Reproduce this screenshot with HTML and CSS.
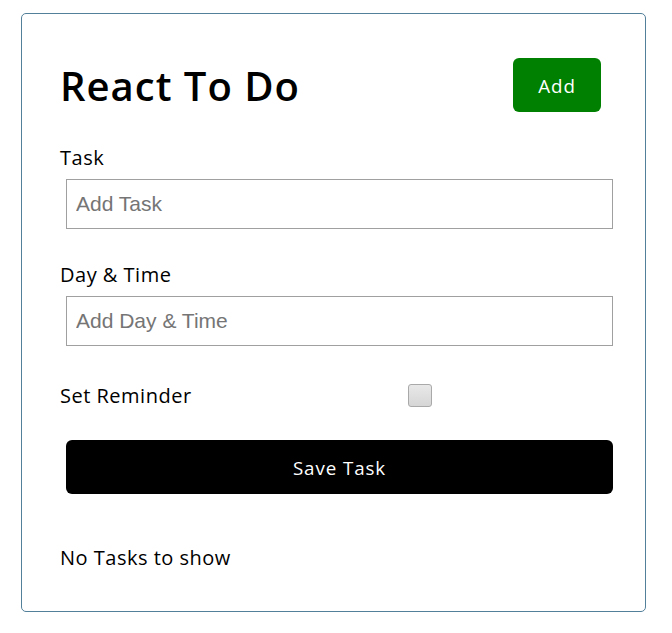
FILE: index.html
```html
<!DOCTYPE html>
<html>
<head>
<meta charset="utf-8">
<link rel="stylesheet" href="styles.css">
</head>
<body>
<div class="container">
  <header class="header">
    <h1 class="title">React To Do</h1>
    <button class="btn btn-add">Add</button>
  </header>
  <form class="add-form">
    <div class="form-control">
      <label class="field-label">Task</label>
      <input class="text-input" type="text" placeholder="Add Task">
    </div>
    <div class="form-control">
      <label class="field-label">Day &amp; Time</label>
      <input class="text-input" type="text" placeholder="Add Day &amp; Time">
    </div>
    <div class="form-control-check">
      <label class="field-label check-label">Set Reminder</label>
      <div class="check-wrap"><input class="check" type="checkbox"></div>
    </div>
    <button type="button" class="btn btn-block">Save Task</button>
  </form>
  <p class="empty">No Tasks to show</p>
</div>
</body>
</html>
```
FILE: styles.css
```css
* { box-sizing: border-box; }
body {
  margin: 0;
  background: #fff;
  font-family: "Open Sans", "Noto Sans", sans-serif;
  color: #000;
}
.container {
  width: 625px;
  height: 599px;
  margin: 13px 0 0 21px;
  border: 1px solid #527f99;
  border-radius: 5px;
  padding: 38px;
}
.header {
  display: flex;
  justify-content: space-between;
  align-items: center;
  height: 66px;
}
.title {
  margin: 0;
  font-size: 40px;
  font-weight: 600;
  letter-spacing: 1px;
}
.btn {
  display: inline-block;
  background: #000;
  color: #fff;
  border: none;
  margin: 6px;
  border-radius: 6px;
  font-family: inherit;
  font-size: 18.75px;
  letter-spacing: 0.9px;
  cursor: pointer;
}
.btn-add {
  background: #008000;
  width: 88px;
  height: 54px;
  padding: 0;
}
.add-form { margin-top: 25px; }
.form-control {
  display: flow-root;
  margin-bottom: 25px;
}
.field-label {
  display: block;
  font-size: 20px;
  line-height: 30px;
  letter-spacing: 0.5px;
}
.text-input {
  display: block;
  width: 547px;
  height: 50px;
  margin: 6px;
  padding: 3px 9px;
  border: 1px solid #a0a0a0;
  font-family: "Liberation Sans", Arial, sans-serif;
  font-size: 21px;
  letter-spacing: 0;
  outline: none;
}
.text-input::placeholder { color: #757575; }
.form-control-check {
  display: flex;
  align-items: center;
  height: 37px;
}
.check-label { flex: 1; }
.check-wrap {
  flex: 2;
  display: flex;
  justify-content: center;
  margin: 6px;
  padding-right: 4px;
}
.check {
  appearance: none;
  -webkit-appearance: none;
  width: 24px;
  height: 23px;
  margin: 0;
  border: 1px solid #a9a9a9;
  border-radius: 3px;
  background: linear-gradient(#e8e8e8, #d6d6d6);
}
.btn-block {
  display: block;
  width: 547px;
  height: 54px;
  margin: 26px 6px 0 6px;
  padding: 0;
}
.empty {
  margin: 49px 0 0 0;
  font-size: 20px;
  line-height: 30px;
  letter-spacing: 0.5px;
}
```
